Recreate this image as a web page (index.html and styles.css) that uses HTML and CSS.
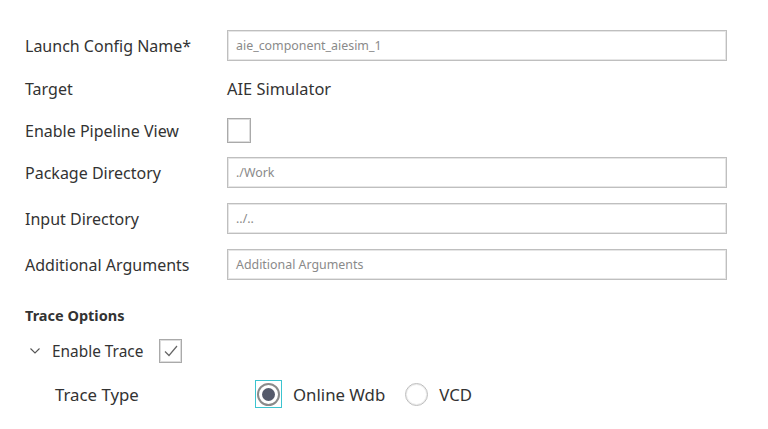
FILE: index.html
```html
<!DOCTYPE html>
<html>
<head>
<meta charset="utf-8">
<link rel="stylesheet" href="styles.css">
</head>
<body>
<div class="form">
  <div class="row">
    <div class="label">Launch Config Name*</div>
    <div class="input">aie_component_aiesim_1</div>
  </div>
  <div class="row">
    <div class="label">Target</div>
    <div class="value">AIE Simulator</div>
  </div>
  <div class="row short">
    <div class="label">Enable Pipeline View</div>
    <div class="checkbox"></div>
  </div>
  <div class="row">
    <div class="label">Package Directory</div>
    <div class="input">./Work</div>
  </div>
  <div class="row wide">
    <div class="label">Input Directory</div>
    <div class="input">../..</div>
  </div>
  <div class="row wide">
    <div class="label">Additional Arguments</div>
    <div class="input">Additional Arguments</div>
  </div>

  <div class="section-title">Trace Options</div>
  <div class="trace-row">
    <svg class="chev" width="10" height="6" viewBox="0 0 10 6"><path d="M0.5 0.5 L5 5 L9.5 0.5" fill="none" stroke="#555" stroke-width="1.1"/></svg>
    <span class="trace-label">Enable Trace</span>
    <div class="checkbox small">
      <svg width="16" height="14" viewBox="0 0 16 14"><path d="M2 7.5 L6 11.5 L14 2" fill="none" stroke="#666" stroke-width="1.2"/></svg>
    </div>
  </div>
  <div class="type-row">
    <div class="type-label">Trace Type</div>
    <div class="radios">
      <div class="radio-item">
        <div class="focus"><div class="radio on"><div class="dot"></div></div></div>
        <span>Online Wdb</span>
      </div>
      <div class="radio-item">
        <div class="radio"></div>
        <span>VCD</span>
      </div>
    </div>
  </div>
</div>
</body>
</html>
```

FILE: styles.css
```css
html, body {
  margin: 0;
  padding: 0;
  background: #ffffff;
}
body {
  font-family: "Noto Sans", "Open Sans", sans-serif;
  color: #333333;
}
.form {
  padding: 30px 0 0 25px;
}
.row {
  display: flex;
  align-items: center;
  height: 31px;
  margin-bottom: 12px;
}
.row.short {
  height: 29px;
}
.row.wide {
  margin-top: 15px;
}
.label {
  width: 202px;
  flex: none;
  font-size: 16px;
  color: #333;
}
.input {
  box-sizing: border-box;
  width: 500px;
  height: 31px;
  border: 1px solid #bfbfbf;
  box-shadow: inset 0 0 0 1px #e6e6e6;
  padding: 0 8px;
  display: flex;
  align-items: center;
  font-size: 12.4px;
  color: #8a8a8a;
}
.value {
  font-size: 16.4px;
  color: #333;
}
.checkbox {
  box-sizing: border-box;
  width: 24px;
  height: 25px;
  border: 1px solid #aaaaaa;
  box-shadow: inset 0 0 0 1px #dddddd;
  background: #fff;
}
.checkbox.small {
  width: 23px;
  height: 24px;
  display: flex;
  align-items: center;
  justify-content: center;
}
.section-title {
  margin-top: 25px;
  font-size: 14.5px;
  font-weight: bold;
  color: #333;
  line-height: 20px;
}
.trace-row {
  display: flex;
  align-items: center;
  margin-top: 14px;
  padding-left: 5px;
}
.chev {
  margin-right: 12px;
}
.trace-label {
  font-size: 15.4px;
  color: #333;
  margin-right: 16px;
}
.type-row {
  display: flex;
  align-items: center;
  margin-top: 17px;
  padding-left: 30px;
}
.type-label {
  width: 200px;
  font-size: 16.8px;
  color: #333;
}
.radios {
  display: flex;
  align-items: center;
}
.radio-item {
  display: flex;
  align-items: center;
  font-size: 16.8px;
  color: #333;
  margin-right: 20px;
}
.radio-item span {
  margin-left: 11px;
}
.focus {
  box-sizing: border-box;
  width: 27px;
  height: 28px;
  border: 1px solid #3cc4d0;
  display: flex;
  align-items: center;
  justify-content: center;
}
.radio {
  box-sizing: border-box;
  width: 23px;
  height: 23px;
  border-radius: 50%;
  border: 1px solid #bdbdbd;
  box-shadow: inset 0 0 0 1px #ececec;
  display: flex;
  align-items: center;
  justify-content: center;
  background: #fff;
}
.radio.on {
  border: 2px solid #8a8a8a;
  box-shadow: none;
}
.dot {
  width: 13px;
  height: 13px;
  border-radius: 50%;
  background: #555a6b;
}
```
